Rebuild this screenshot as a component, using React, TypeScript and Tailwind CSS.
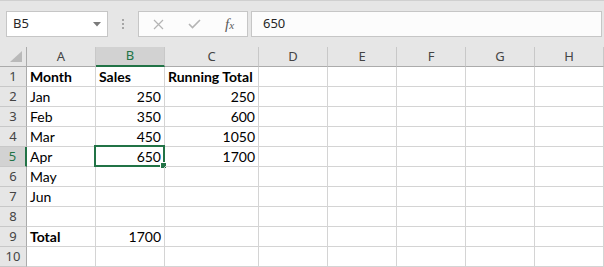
import React from "react";

const COLS = ["A", "B", "C", "D", "E", "F", "G", "H"];

type Cell = { v: string; num?: boolean; bold?: boolean };

const ROWS: Cell[][] = [
  [{ v: "Month", bold: true }, { v: "Sales", bold: true }, { v: "Running Total", bold: true }],
  [{ v: "Jan" }, { v: "250", num: true }, { v: "250", num: true }],
  [{ v: "Feb" }, { v: "350", num: true }, { v: "600", num: true }],
  [{ v: "Mar" }, { v: "450", num: true }, { v: "1050", num: true }],
  [{ v: "Apr" }, { v: "650", num: true }, { v: "1700", num: true }],
  [{ v: "May" }],
  [{ v: "Jun" }],
  [],
  [{ v: "Total", bold: true }, { v: "1700", num: true }],
  [],
];

const cellFont = { fontFamily: "Lato, 'Noto Sans', sans-serif" };

export default function App() {
  return (
    <div className="w-[604px] h-[267px] overflow-hidden bg-white select-none" style={{ fontFamily: "'Noto Sans', 'Open Sans', sans-serif" }}>
      {/* toolbar: name box + formula bar */}
      <div className="h-[47px] bg-[#e6e6e6] border-t border-[#d0d0d0] flex items-start pt-[10px] pl-[6px] pr-[2px]">
        <div className="w-[102px] h-[26px] bg-white border border-[#c6c6c6] flex items-center justify-between pl-[6px] pr-[6px]">
          <span className="text-[13px] text-[#262626]">B5</span>
          <svg width="8" height="5" viewBox="0 0 8 5"><polygon points="0,0 8,0 4,4.5" fill="#7a7a7a" /></svg>
        </div>
        <div className="w-[30px] h-[26px] flex flex-col items-center justify-center gap-[2px]">
          <span className="w-[2px] h-[2px] bg-[#a6a6a6]" />
          <span className="w-[2px] h-[2px] bg-[#a6a6a6]" />
          <span className="w-[2px] h-[2px] bg-[#a6a6a6]" />
        </div>
        <div className="w-[110px] h-[26px] bg-[#fcfcfc] border border-[#c6c6c6] flex items-center">
          <div className="w-[37px] flex justify-center pl-[2px]">
            <svg width="11" height="11" viewBox="0 0 11 11">
              <path d="M1 1 L10 10 M10 1 L1 10" stroke="#b4b4b4" strokeWidth="1.2" fill="none" />
            </svg>
          </div>
          <div className="w-[36px] flex justify-center">
            <svg width="13" height="10" viewBox="0 0 13 10">
              <path d="M1 5 L4.5 8.5 L12 1" stroke="#b4b4b4" strokeWidth="1.6" fill="none" />
            </svg>
          </div>
          <div className="w-[35px] flex justify-center">
            <span className="italic text-[#5a5a5a] text-[15px] leading-none" style={{ fontFamily: "'Liberation Serif', serif" }}>
              f<span className="text-[11px]">x</span>
            </span>
          </div>
        </div>
        <div className="ml-[3px] flex-1 h-[26px] bg-[#fcfcfc] border border-[#c6c6c6] flex items-center pl-[11px]">
          <span className="text-[13px] text-[#262626]">650</span>
        </div>
      </div>

      {/* grid */}
      <div className="grid grid-cols-[27px_69px_69px_94px_69px_69px_69px_69px_69px] grid-rows-[20px_repeat(10,20px)]">
        {/* corner */}
        <div className="bg-[#e6e6e6] border-r border-b border-[#ababab] flex items-end justify-end pr-[4px] pb-[4px]">
          <svg width="12" height="11" viewBox="0 0 12 11"><polygon points="12,0 12,11 0,11" fill="#b9b9b9" /></svg>
        </div>
        {COLS.map((c, i) => (
          <div
            key={c}
            className={`flex items-center justify-center text-[13px] border-r border-[#c8c8c8] ${
              c === "B"
                ? "bg-[#d2d2d2] text-[#217346] border-b-2 border-b-[#217346]"
                : "bg-[#e6e6e6] text-[#444444] border-b border-b-[#ababab]"
            } ${i === 0 ? "" : ""}`}
          >
            {c}
          </div>
        ))}

        {ROWS.map((row, r) => {
          const sel = r === 4;
          return (
            <React.Fragment key={r}>
              <div
                className={`flex items-center justify-center text-[13px] border-b border-[#c8c8c8] ${
                  sel
                    ? "bg-[#d2d2d2] text-[#217346] border-r-2 border-r-[#217346]"
                    : "bg-[#e6e6e6] text-[#444444] border-r border-r-[#ababab]"
                }`}
              >
                {r + 1}
              </div>
              {COLS.map((c, ci) => {
                const cell = row[ci];
                return (
                  <div
                    key={c}
                    className={`relative flex items-center border-r border-b border-[#d4d4d4] text-[14px] text-black px-[3px] ${
                      cell?.num ? "justify-end" : "justify-start"
                    } ${cell?.bold ? "font-bold" : ""} whitespace-nowrap`}
                    style={cellFont}
                  >
                    {cell?.v}
                    {sel && c === "B" && (
                      <div className="absolute -left-[2px] -top-[2px] -right-[1px] -bottom-[1px] border-2 border-[#217346] pointer-events-none">
                        <div className="absolute -right-[4px] -bottom-[4px] w-[5px] h-[5px] bg-[#217346] border border-white box-content" />
                      </div>
                    )}
                  </div>
                );
              })}
            </React.Fragment>
          );
        })}
      </div>
    </div>
  );
}
